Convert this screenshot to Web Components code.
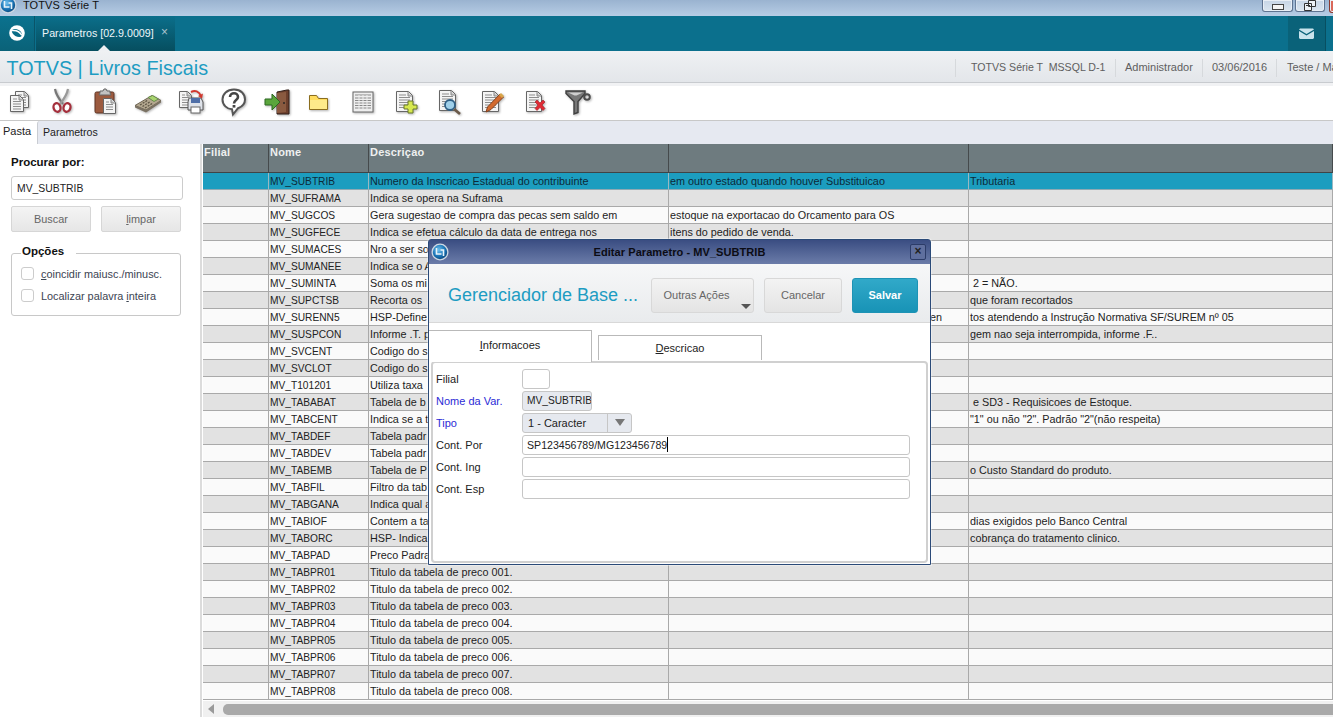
<!DOCTYPE html>
<html lang="pt-BR"><head><meta charset="utf-8"><title>TOTVS Série T</title>
<style>
html,body{margin:0;padding:0;background:#fff}
body{width:1333px;height:717px;overflow:hidden;position:relative;display:flex;flex-direction:column;font:11px "Liberation Sans",Arial,sans-serif;color:#222}
</style></head><body>
<win-titlebar></win-titlebar>
<app-tabs></app-tabs>
<app-head></app-head>
<tool-bar></tool-bar>
<page-tabs></page-tabs>
<main-area><search-panel slot="left"></search-panel><data-grid slot="right"></data-grid></main-area>
<edit-dialog></edit-dialog>
<script>
function def(name,css,html,init){
  customElements.define(name,class extends HTMLElement{
    constructor(){super();const r=this.attachShadow({mode:'open'});r.innerHTML='<style>'+css+'</style>'+html;if(init)init(r,this);}
  });
}
const ball=id=>`<svg width="18" height="18" viewBox="0 0 18 18"><defs><radialGradient id="${id}" cx=".4" cy=".35" r=".75"><stop offset="0" stop-color="#6fc0ee"/><stop offset=".6" stop-color="#1872b4"/><stop offset="1" stop-color="#0c3f70"/></radialGradient></defs><circle cx="9" cy="9" r="8.5" fill="#cfd9e4"/><circle cx="9" cy="9" r="7.2" fill="url(#${id})"/><path d="M5.500 5v6h5M12.500 13V7h-3" fill="none" stroke="#e8f4fb" stroke-width="1.6"/></svg>`;

def('win-titlebar',`:host{display:flex;flex:none;height:16px;overflow:hidden;align-items:flex-start;background:linear-gradient(#9ab3d0,#b7cde5);color:#111;font:11px "Liberation Sans",Arial,sans-serif}
.i{margin:-4px 0 0 -1px;width:18px;height:18px}.t{margin:-1px 0 0 6px;flex:1;line-height:13px;letter-spacing:.1px}
.b{height:12px;box-sizing:border-box;border:1px solid #5e7390;border-top:0;border-radius:0 0 3px 3px;background:linear-gradient(#c6d5e6,#dbe5ef);display:flex;align-items:center;justify-content:center;box-shadow:inset 0 0 0 1px #e8eef5}
.m{width:31px;margin-right:2px}.m i{display:block;width:10px;height:4px;margin-top:3px;border:1px solid #444;background:#f4f4f4}
.r{width:30px;margin-right:4px}.c{padding:0;background:#d9685a;border-color:#8a3a30;box-sizing:content-box;width:10px;margin-right:-8px}`,
`<span class="i">${ball('b1')}</span><span class="t">TOTVS Série T</span>
<span class="b m"><i></i></span><span class="b r"><svg width="12" height="11" viewBox="0 0 12 11"><path d="M4.500.5h7v6h-7zM.5 3.500h7v7h-7z" fill="#eef2f6" stroke="#333"/><path d="M2 5.500h4" stroke="#333"/></svg></span><span class="b c"></span>`);

def('app-tabs',`:host{display:flex;flex:none;height:35px;background:#0b708d;color:#fff;font:10.7px "Liberation Sans",Arial,sans-serif}
.home{width:35px;box-sizing:border-box;border-right:1px solid #0a5468;background:linear-gradient(#0b728f,#0a6278);display:flex;align-items:center;justify-content:center;padding-bottom:1px}
.tab{width:139px;margin-left:1px;background:linear-gradient(#0b6f8b,#064e5f);position:relative;display:flex;align-items:center;padding:0 0 1px 6px;box-sizing:border-box}
.tab b{font-weight:400;color:#eef6f9;white-space:nowrap}.tab s{position:absolute;left:125px;top:10px;text-decoration:none;color:#a9c5cf;font-size:12px;line-height:12px}
.tab::after{content:"";position:absolute;left:62px;bottom:0;border:6px solid transparent;border-top:0;border-bottom:6px solid #eef0f3}
.sp{flex:1}.mail{width:37px;background:#0a6279;border-right:1px solid #074f61;display:flex;align-items:center;justify-content:center;margin-right:7px;box-sizing:content-box}`,
`<div class="home"><svg width="18" height="18" viewBox="0 0 18 18"><circle cx="9" cy="9" r="7.800" fill="#fff"/><ellipse cx="9" cy="9" rx="5.600" ry="3.400" transform="rotate(30 9 9)" fill="#0b6d88"/><path d="M4 6.500C8 6 12 8 14 11.500" fill="none" stroke="#fff" stroke-width="1.500"/></svg></div>
<div class="tab"><b>Parametros [02.9.0009]</b><s>×</s></div><div class="sp"></div>
<div class="mail"><svg width="15" height="11" viewBox="0 0 15 11"><path d="M0 1.500 1 .5h13l1 1L7.500 6z" fill="#c9e3ec"/><path d="M0 3v7l1 1h13l1-1V3L7.500 7.500z" fill="#c9e3ec"/></svg></div>`);

def('app-head',`:host{display:flex;flex:none;height:32px;box-sizing:border-box;border-bottom:1px solid #c8cbcf;background:linear-gradient(#eff1f3,#e3e6ea);overflow:hidden}
.t{flex:1;padding-left:6.500px;font:19.800px/35px "Liberation Sans",Arial,sans-serif;color:#1d9cc2;white-space:nowrap}
.i{flex:none;margin-top:8px;height:18px;border-left:1px solid #d6d9dc;padding-left:9px;box-sizing:border-box;font:11px/17px "Liberation Sans",Arial,sans-serif;color:#5e5e5e;white-space:pre}`,
`<div class="t">TOTVS | Livros Fiscais</div>
<div class="i" style="width:160px;padding-left:15px;font-size:10.6px">TOTVS Série T  MSSQL D-1</div><div class="i" style="width:87px">Administrador</div><div class="i" style="width:74px">03/06/2016</div><div class="i" style="width:57px;padding-left:10px">Teste / Ma</div>`);

const doc=(x,y,w,h)=>{let s=`<path d="M${x+.5} ${y+.5}h${w-5}l4 4v${h-5}h-${w-1}z" fill="#f4f4f4" stroke="#666"/><path d="M${x+w-5} ${y+1}v4h4" fill="#ccc" stroke="#888"/>`;for(let l=y+4;l<y+h-2;l+=2.5)s+=`<path d="M${x+3} ${l}h${(l<y+6?w-10:w-6)}" stroke="#8d8d8d"/>`;return s;};
const icons={
copy:doc(11,4,14,17)+doc(6,8,14,17),
cut:`<path d="M8 2c1 6 4 10 8 15" fill="none" stroke="#777" stroke-width="2.200"/><path d="M21 2c-1 6-4 10-8 15" fill="none" stroke="#999" stroke-width="2.200"/><ellipse cx="10" cy="20.500" rx="3.400" ry="4.300" fill="#fff" stroke="#a52f3c" stroke-width="2.300" transform="rotate(-18 10 20.500)"/><ellipse cx="20" cy="20.500" rx="3.400" ry="4.300" fill="#fff" stroke="#a52f3c" stroke-width="2.300" transform="rotate(18 20 20.500)"/>`,
clip:`<rect x="5" y="5" width="19" height="21" rx="1.500" fill="#9c5b3f" stroke="#5f3524"/><path d="M10 6V4h3l1-2h2l1 2h3v2l1 2H9z" fill="#c2c2c2" stroke="#666"/>`+doc(13,11,13,16),
calc:`<path d="M2 18.500 19 8.500l9 5-15 9.500z" fill="#b3a78f" stroke="#6f6654"/><path d="M2 18.500v2l11 5 15-10v-2L13 23z" fill="#7b7263"/><path d="M15 10.500l4.500-2 6 3.500-4.500 2.500z" fill="#a8d46e" stroke="#6b8a50"/><path d="M7 18l8-5M9.500 19.500l8-5M12 21l8-5" stroke="#5d5545" stroke-dasharray="2 1.200" stroke-width="1.300"/>`,
print:doc(3,4,13,17)+`<path d="M13 11h12l2 4v8H12v-8z" fill="#dfe3ea" stroke="#555"/><rect x="15" y="11" width="9" height="5" fill="#4f6fa8"/><rect x="15" y="20" width="9" height="6" fill="#fff" stroke="#666"/><path d="M15 5c4-2 8-1 10 4" fill="none" stroke="#d1382e" stroke-width="2"/><path d="M22 9l4 2.500 1-5z" fill="#d1382e"/>`,
help:`<path d="M15 2.500C8 2.500 3.500 7 3.500 12.500S8 22 13 22.300l1 5.200 5-6.300c4-1.500 7-5 7-8.700C26 7 22 2.500 15 2.500z" fill="#fff" stroke="#555" stroke-width="2"/><path d="M11 10c0-5 8-5 8 0 0 3-4 3-4 6.500" fill="none" stroke="#444" stroke-width="2.600"/><rect x="13.600" y="18" width="2.800" height="2.600" fill="#444"/>`,
exit:`<path d="M15 5l10-2h2v24H15z" fill="#6d3f2c" stroke="#33201a"/><path d="M15 6l9-1v20l-9 1z" fill="#8a5a40"/><circle cx="22" cy="16" r=".9" fill="#222"/><path d="M3 12h7V7l8 8-8 8v-5H3z" fill="#5aa53c" stroke="#2d6a22"/>`,
folder:`<path d="M4.500 8.500V22.500h18V11.500h-9l-2-3h-7z" fill="#ffdc5e" stroke="#8a6d1e"/><path d="M5 13h17v9H5z" fill="#fdea8a"/>`,
table:`<rect x="5" y="5" width="20" height="20" fill="#eee" stroke="#666"/><path d="M7 8h16M7 11h16M7 13.500h16M7 16h16M7 18.500h16M7 21h16" stroke="#888"/><path d="M11 8v14M15 8v14M19 8v14" stroke="#eee"/>`,
add:doc(5,4,17,21)+`<path d="M17 14h5v4h4v4h-4v4h-5v-4h-4v-4h4z" fill="#d6e84e" stroke="#66762a"/>`,
find:doc(5,3,17,21)+`<circle cx="16" cy="18" r="5" fill="#9fd0ea" stroke="#2f5f85" stroke-width="1.800"/><path d="M20 22l6 5" stroke="#6b5a4a" stroke-width="2.800"/>`,
edit:doc(5,4,17,21)+`<path d="M9 25l1.500-5L23 7l3.500 3L14 22.500z" fill="#d36a2e" stroke="#82411e"/><path d="M22 8l2-2 3 3-2 2z" fill="#d8a64a"/>`,
del:doc(6,4,16,21)+`<path d="M15 15l2-2 3 3 3-3 2 2-3 3 3 3.500-2 2-3-3-3 3-2-2 3-3.500z" fill="#e02b35" stroke="#9a1a22" stroke-width=".6"/>`,
funnel:`<path d="M3 4h19v2.500l-7 8v11l-4 1.500v-12.500l-8-8z" fill="#777" stroke="#3f3f3f" stroke-width="1.400"/><path d="M5 5.500h15l-6.500 3h-2z" fill="#cfcfcf"/><circle cx="24" cy="10" r="2.800" fill="none" stroke="#4b4b4b" stroke-width="2"/>`
};
def('tool-icon',`:host{display:flex;width:43px;justify-content:center;align-items:center}svg{filter:drop-shadow(1px 1px 1px rgba(0,0,0,.3))}`,`<svg width="30" height="30" viewBox="0 0 30 30"></svg>`);
def('tool-bar',`:host{display:block;flex:none;height:38px;box-sizing:border-box;background:#fff;border-bottom:1px solid #c8c8c8;overflow:hidden;position:relative}
.s{height:3px;background:#f1f2f4}.r{display:flex;margin-left:-3px;height:32px;align-items:center}`,
`<div class="s"></div><div class="r"></div>`,(r)=>{
  const row=r.querySelector('.r');
  for(const k of ['copy','cut','clip','calc','print','help','exit','folder','table','add','find','edit','del','funnel']){
    const e=document.createElement('tool-icon');e.shadowRoot.querySelector('svg').innerHTML=icons[k];row.appendChild(e);
  }
});

def('page-tabs',`:host{display:flex;flex:none;height:23px;background:#fff;font:10.6px "Liberation Sans",Arial,sans-serif;color:#222}
.a{width:37px;box-sizing:border-box;padding:2px 0 0 3px;line-height:17px;font-size:11px}
.b{flex:1;background:#e6e9f1;border-left:1px solid #c9ccd2;border-radius:3px 0 0 0;padding-left:5px;line-height:23px}`,
`<div class="a">Pasta</div><div class="b">Parametros</div>`);

def('main-area',`:host{display:flex;flex:1;min-height:0;background:#fff}.l{width:203px;flex:none;display:flex}.r{flex:1;min-width:0;display:flex}`,
`<div class="l"><slot name="left"></slot></div><div class="r"><slot name="right"></slot></div>`);

def('search-panel',`:host{display:block;width:200px;height:100%;border-right:2px solid #dcdcdc;font:10.9px "Liberation Sans",Arial,sans-serif;color:#4a4a4a}
h4{margin:0;padding:11px 0 0 11px;font:bold 11.500px/15px "Liberation Sans",Arial,sans-serif;color:#111}
.in{margin:6px 0 0 11px;width:172px;height:24px;box-sizing:border-box;border:1px solid #ccc;border-radius:3px;padding:0 5px;line-height:23px;color:#222;font-size:10.4px}
.bs{display:flex;gap:10px;margin:6px 0 0 11px}.bt{width:80px;height:26px;box-sizing:border-box;border:1px solid #d6d6d6;border-radius:2px;background:linear-gradient(#f4f4f4,#e6e6e6);text-align:center;line-height:24px;color:#666}
fieldset{margin:15px 0 0 11px;width:170px;height:69px;box-sizing:border-box;border:1px solid #c8c8c8;border-radius:3px;padding:8px 0 0 9px}
legend{font:bold 11.500px/12px "Liberation Sans",Arial,sans-serif;color:#111;padding:0 12px 0 1px;position:relative;top:-2px}
.c{display:flex;align-items:center;height:13px;margin-bottom:9px;color:#3c4452}.c i{width:13px;height:13px;box-sizing:border-box;border:1px solid #ccc;border-radius:3px;margin-right:7px}`,
`<h4>Procurar por:</h4><div class="in">MV_SUBTRIB</div>
<div class="bs"><div class="bt">Buscar</div><div class="bt"><u>l</u>impar</div></div>
<fieldset><legend>Opções</legend><div class="c"><i></i><span><u>c</u>oincidir maiusc./minusc.</span></div><div class="c"><i></i><span>Localizar palavra <u>i</u>nteira</span></div></fieldset>`);

const rows=[
["MV_SUBTRIB","Numero da Inscricao Estadual do contribuinte","em outro estado quando houver Substituicao","Tributaria"],
["MV_SUFRAMA","Indica se opera na Suframa","",""],
["MV_SUGCOS","Gera sugestao de compra das pecas sem saldo em","estoque na exportacao do Orcamento para OS",""],
["MV_SUGFECE","Indica se efetua cálculo da data de entrega nos","itens do pedido de venda.",""],
["MV_SUMACES","Nro a ser so","",""],
["MV_SUMANEE","Indica se o A","",""],
["MV_SUMINTA","Soma os mi",""," 2 = NÃO."],
["MV_SUPCTSB","Recorta os","","que foram recortados"],
["MV_SURENN5","HSP-Define","@en","tos atendendo a Instrução Normativa SF/SUREM nº 05"],
["MV_SUSPCON","Informe .T. p","","gem nao seja interrompida, informe .F.."],
["MV_SVCENT","Codigo do s","",""],
["MV_SVCLOT","Codigo do s","",""],
["MV_T101201","Utiliza taxa","",""],
["MV_TABABAT","Tabela de b",""," e SD3 - Requisicoes de Estoque."],
["MV_TABCENT","Indica se a t","","\"1\" ou não \"2\". Padrão \"2\"(não respeita)"],
["MV_TABDEF","Tabela padr","",""],
["MV_TABDEV","Tabela padr","",""],
["MV_TABEMB","Tabela de P","","o Custo Standard do produto."],
["MV_TABFIL","Filtro da tab","",""],
["MV_TABGANA","Indica qual a","",""],
["MV_TABIOF","Contem a ta","","dias exigidos pelo Banco Central"],
["MV_TABORC","HSP- Indica","","cobrança do tratamento clinico."],
["MV_TABPAD","Preco Padra","",""]];
for(let i=1;i<=8;i++)rows.push(["MV_TABPR0"+i,"Titulo da tabela de preco 00"+i+".","",""]);
def('data-grid',`:host{display:flex;flex-direction:column;flex:1;min-width:0;height:100%;font:10.8px/16px "Liberation Sans",Arial,sans-serif;color:#222;overflow:hidden}
.g{flex:1;display:grid;grid-template-columns:66px 100px 300px 300px 1fr;grid-auto-rows:17px;align-content:start;min-height:0}
.c{box-sizing:border-box;border-right:1px solid #a9a9a9;border-bottom:1px solid #a9a9a9;padding-left:1px;white-space:pre;overflow:hidden;line-height:16px}
.c.nm{font-size:10.200px;line-height:17px}
.o{background:#e2e2e2}.e{background:#fafafa}.s{background:#1c9dbf;color:#0c2a38;border-right-color:#9ab8c2;border-bottom-color:#8fa9b3}
.hd{display:grid;grid-template-columns:66px 100px 300px 300px 1fr;height:29px;flex:none}
.hd div{background:#6e7b7f;color:#eef0f0;font-size:11px;font-weight:700;border-right:1px solid #454a4c;border-bottom:1px solid #3f4446;padding-left:1px;box-sizing:border-box;letter-spacing:.2px}
.sb{flex:none;height:17px;background:#f0f0f0;border-top:1px solid #fff;display:flex;align-items:center;box-sizing:border-box}
.sb i{width:0;height:0;border:5px solid transparent;border-left:0;border-right:6px solid #9a9a9a;margin-left:5px}
.sb b{flex:1;height:11px;margin-left:9px;background:#a9a9a9;border-radius:5px 0 0 5px}`,
`<div class="hd"><div>Filial</div><div>Nome</div><div>Descriçao</div><div></div><div></div></div><div class="g"></div><div class="sb"><i></i><b></b></div>`,
(r)=>{let h='';rows.forEach((x,i)=>{const k=i==0?'s':(i%2?'o':'e');
  const d=x[2].startsWith('@')?`<div class="c ${k}" style="padding-left:261px">${x[2].slice(1)}</div>`:`<div class="c ${k}">${x[2]}</div>`;
  h+=`<div class="c ${k}"></div><div class="c nm ${k}">${x[0]}</div><div class="c ${k}">${x[1]}</div>${d}<div class="c ${k}">${x[3]}</div>`;});
 r.querySelector('.g').innerHTML=h;});

def('edit-dialog',`:host{position:absolute;left:428px;top:239px;width:503px;height:326px;box-sizing:border-box;border:1px solid #2b4a78;border-radius:3px 3px 0 0;background:#fff;display:flex;flex-direction:column;font:11px "Liberation Sans",Arial,sans-serif;color:#222;box-shadow:0 0 0 1px rgba(255,255,255,.35)}
.tb{height:24px;flex:none;background:linear-gradient(#3a4d82,#6b7ca9);display:flex;align-items:center;position:relative;padding-left:2px}
.tb .n{position:absolute;left:0;right:0;text-align:center;font-weight:700;color:#0c0c14;letter-spacing:.07px}
.tb .x{position:absolute;right:4px;top:4px;width:16px;height:16px;box-sizing:border-box;border:1px solid #2c3c68;border-radius:2px;background:#5f6f9e;color:#222;text-align:center;line-height:13px;font-weight:700;font-size:12px}
.hd{height:59px;flex:none;box-sizing:border-box;border-bottom:1px solid #d8d8d8;background:linear-gradient(#f6f7f8,#e9ebed);display:flex;align-items:center;padding:4px 12px 0 19px}
.hd h2{margin:0;flex:1;font:18px "Liberation Sans",Arial,sans-serif;color:#1d9cc2;white-space:nowrap}
.bt{height:35px;box-sizing:border-box;border:1px solid #d8d8d8;border-radius:3px;background:linear-gradient(#f3f3f3,#e4e4e4);color:#666;text-align:center;line-height:33px;position:relative}
.bt.o{width:103px;padding-right:12px}.bt.o::after{content:"";position:absolute;right:2px;bottom:3px;border:5px solid transparent;border-bottom:0;border-top:5px solid #555}
.bt.c{width:78px;margin-left:10px}.bt.s{width:66px;margin-left:10px;border-color:#1d93b5;background:linear-gradient(#31a9c9,#1893b6);color:#fff;font-weight:700}
.tabs{height:38px;flex:none;display:flex;align-items:flex-end;background:#fff;position:relative;z-index:1}
.t{box-sizing:border-box;text-align:center;color:#222;background:#fff;border:1px solid #b9b9b9;border-bottom:0}
.t.a{width:163px;height:32px;line-height:28px;margin-bottom:-1px;border-left:0;padding-bottom:2px}.t.b{width:164px;height:25px;margin-left:6px;line-height:24px;margin-bottom:1px}
.pn{margin:0 2px 1px 2px;flex:1;box-sizing:border-box;border:2px solid #d0d0d0;border-radius:4px;padding:6px 0 0 3px;display:grid;grid-template-columns:86px 1fr;grid-auto-rows:20px;row-gap:2px;align-items:center}
label.b{color:#2b2bd6}
.i{height:20px;box-sizing:border-box;border:1px solid #c6c6c6;border-radius:3px;line-height:18px;padding-left:4px;background:#fff;white-space:nowrap;overflow:hidden;position:relative}
.w{width:388px;font-size:10.600px}.g{background:#e6e9ef;font-size:10.200px}
.cb{width:110px;background:#e6e9ef;display:flex;padding-left:5px}.cb span{flex:1}.cb em{width:23px;border-left:1px solid #c6c6c6;position:relative}.cb em::after{content:"";position:absolute;left:7px;top:5px;border:5px solid transparent;border-bottom:0;border-top:7px solid #777}
.car{display:inline-block;width:1px;height:15px;background:#000;vertical-align:top;margin-top:1px}`,
`<div class="tb">${ball('b2')}<span class="n">Editar Parametro - MV_SUBTRIB</span><span class="x">×</span></div>
<div class="hd"><h2>Gerenciador de Base ...</h2><div class="bt o">Outras Ações</div><div class="bt c">Cancelar</div><div class="bt s">Salvar</div></div>
<div class="tabs"><div class="t a"><u>I</u>nformacoes</div><div class="t b"><u>D</u>escricao</div></div>
<div class="pn">
<label>Filial</label><div class="i" style="width:28px"></div>
<label class="b">Nome da Var.</label><div class="i g" style="width:70px">MV_SUBTRIB</div>
<label class="b">Tipo</label><div class="i cb"><span>1 - Caracter</span><em></em></div>
<label>Cont. Por</label><div class="i w">SP123456789/MG123456789<span class="car"></span></div>
<label>Cont. Ing</label><div class="i w"></div>
<label>Cont. Esp</label><div class="i w"></div>
</div>`);
</script>
</body></html>
